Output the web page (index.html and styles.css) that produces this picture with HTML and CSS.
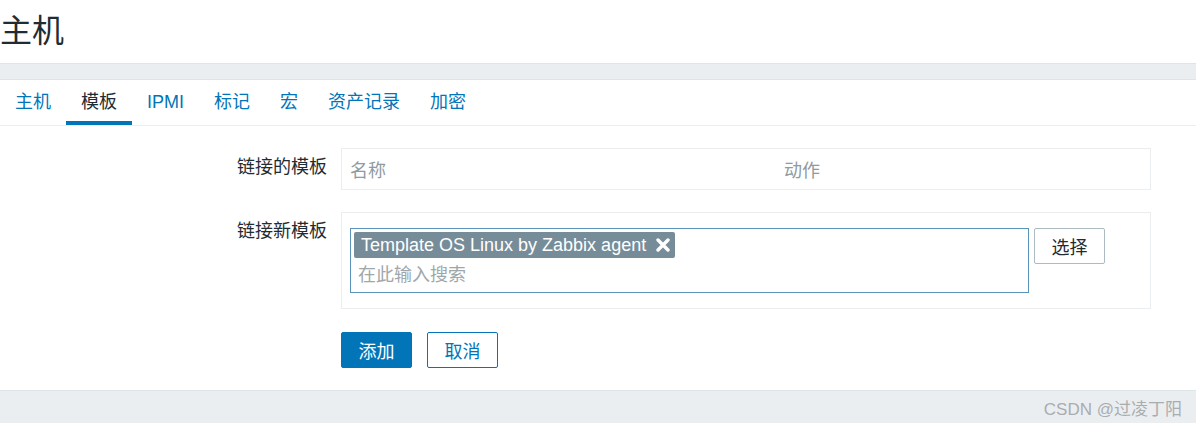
FILE: index.html
```html
<!DOCTYPE html>
<html lang="zh">
<head>
    <meta charset="UTF-8">
    <title>主机</title>
    <link rel="stylesheet" href="styles.css">
</head>
<body>
    <header class="page-header">
        <h1>主机</h1>
    </header>

    <div class="band"></div>

    <main class="content">
        <ul class="tabs">
            <li><a href="#">主机</a></li>
            <li class="active"><a href="#">模板</a></li>
            <li><a href="#">IPMI</a></li>
            <li><a href="#">标记</a></li>
            <li><a href="#">宏</a></li>
            <li><a href="#">资产记录</a></li>
            <li><a href="#">加密</a></li>
        </ul>

        <form class="form">
            <div class="form-row">
                <label class="form-label">链接的模板</label>
                <div class="form-field">
                    <table class="linked">
                        <tr>
                            <th class="col-name">名称</th>
                            <th>动作</th>
                        </tr>
                    </table>
                </div>
            </div>

            <div class="form-row">
                <label class="form-label">链接新模板</label>
                <div class="form-field box">
                    <div class="multiselect">
                        <span class="tag">Template OS Linux by Zabbix agent
                            <svg class="tag-remove" width="14" height="14" viewBox="0 0 14 14"><path d="M2 2L12 12M12 2L2 12" stroke="#fff" stroke-width="3.4" stroke-linecap="round"/></svg>
                        </span>
                        <input type="text" class="ms-input" placeholder="在此输入搜索">
                    </div>
                    <button type="button" class="btn-alt">选择</button>
                </div>
            </div>

            <div class="form-actions">
                <button type="button" class="btn">添加</button>
                <button type="button" class="btn-outline">取消</button>
            </div>
        </form>
    </main>

    <footer class="footer">
        <span class="watermark">CSDN @过凌丁阳</span>
    </footer>
</body>
</html>
```

FILE: styles.css
```css
body {
    font-family: "Liberation Sans", Arial, "Noto Sans CJK SC", sans-serif;
    margin: 0;
    background-color: #fff;
    color: #1f2c33;
    font-size: 18px;
}
.page-header {
    height: 63px;
}
h1 {
    margin: 0;
    font-size: 32px;
    font-weight: normal;
    line-height: 63px;
}
.band {
    height: 15px;
    background: #ebeef0;
    border-top: 1px solid #dfe4e7;
    border-bottom: 1px solid #dfe4e7;
}
.tabs {
    list-style: none;
    margin: 0;
    padding: 0;
    display: flex;
    border-bottom: 1px solid #ebeef0;
}
.tabs li a {
    display: block;
    padding: 10px 15px 7px;
    line-height: 24px;
    color: #0275b8;
    text-decoration: none;
    border-bottom: 4px solid transparent;
}
.tabs li.active a {
    color: #1f2c33;
    border-bottom-color: #0275b8;
}
.form {
    padding: 22px 0 22px;
}
.form-row {
    display: flex;
    align-items: flex-start;
    margin-bottom: 22px;
}
.form-row + .form-row {
    margin-bottom: 23px;
}
.form-label {
    width: 327px;
    text-align: right;
    padding-top: 7px;
    line-height: 24px;
    margin-right: 14px;
    flex-shrink: 0;
}
.form-field {
    width: 810px;
}
.linked {
    width: 100%;
    border-collapse: collapse;
    border: 1px solid #ebeef0;
}
.linked th {
    text-align: left;
    font-weight: normal;
    color: #8f9aa1;
    height: 40px;
    padding: 0 8px;
}
.linked th.col-name {
    width: 418px;
}
.box {
    border: 1px solid #ebeef0;
    padding: 15px 8px;
    display: flex;
    align-items: flex-start;
    gap: 5px;
    box-sizing: border-box;
}
.multiselect {
    width: 679px;
    height: 65px;
    border: 1px solid #5a94bb;
    padding: 3px;
    box-sizing: border-box;
    flex-shrink: 0;
}
.tag {
    display: inline-flex;
    align-items: center;
    background: #768d99;
    color: #fff;
    border-radius: 2px;
    height: 26px;
    line-height: 26px;
    padding: 0 5px 0 7px;
}
.tag-remove {
    margin-left: 10px;
}
.ms-input {
    display: block;
    border: none;
    outline: none;
    font: inherit;
    padding: 5px 0 0 4px;
    width: 300px;
    line-height: 24px;
}
.ms-input::placeholder {
    color: #a0a7ab;
}
.btn-alt, .btn, .btn-outline {
    font: inherit;
    width: 71px;
    height: 36px;
    border-radius: 2px;
    cursor: pointer;
}
.btn-alt {
    background: #fff;
    border: 1px solid #acbbc2;
    color: #1f2c33;
}
.form-actions {
    display: flex;
    gap: 15px;
    padding-left: 341px;
}
.btn {
    background: #0275b8;
    border: 1px solid #0275b8;
    color: #fff;
}
.btn-outline {
    background: #fff;
    border: 1px solid #0275b8;
    color: #0275b8;
}
.footer {
    background: #ebeef0;
    border-top: 1px solid #dfe4e7;
    height: 33px;
    display: flex;
    justify-content: flex-end;
    align-items: center;
    padding-right: 14px;
}
.watermark {
    color: #a8adb0;
    font-size: 17px;
}
```
